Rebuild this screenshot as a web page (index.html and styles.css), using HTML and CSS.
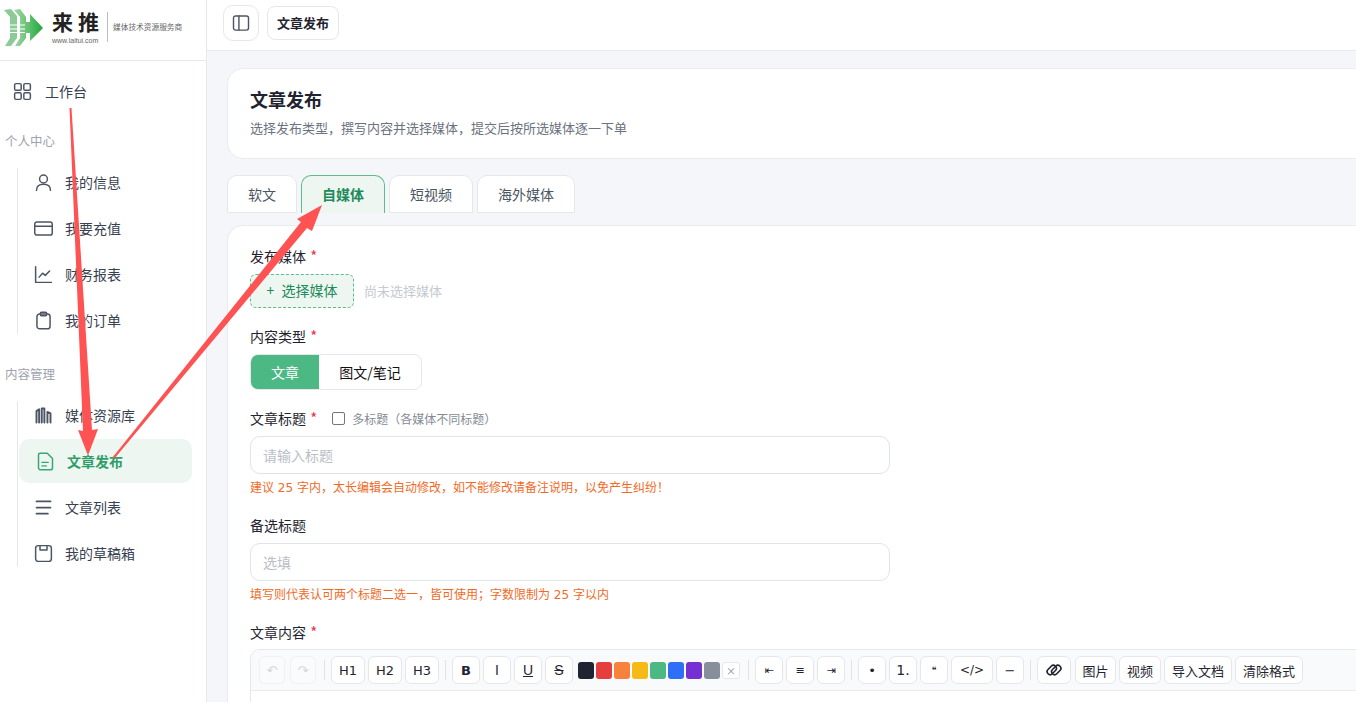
FILE: index.html
```html
<!DOCTYPE html>
<html lang="zh-CN">
<head>
    <meta charset="UTF-8">
    <meta name="viewport" content="width=device-width, initial-scale=1.0">
    <title>文章发布</title>
    <link rel="stylesheet" href="styles.css">
</head>
<body>

    <!-- Left navigation -->
    <aside class="sidebar">
        <div class="logo">
            <svg class="logo-mark" width="44" height="42" viewBox="0 6 44 42">
                <defs>
                    <linearGradient id="logoGreen" x1="0" x2="1" y1="0" y2="0">
                        <stop offset="0" stop-color="#a5d8a8"/>
                        <stop offset="1" stop-color="#1fa83c"/>
                    </linearGradient>
                </defs>
                <path d="M4 10 L11 9 L17 16 L17 38 L11 46 L5 46 L10 38 L10 17 Z" fill="#8ccb98"/>
                <path d="M14 10 L20 9 L26 17 L26 22 L30 22 L30 14 L43 28 L30 41 L30 33 L26 33 L26 38 L20 46 L15 46 L20 38 L20 17 Z" fill="url(#logoGreen)"/>
                <path d="M9 25 H17 M9 29 H17 M9 32.5 H17 M19 25 H25 M19 29 H25 M19 32.5 H25" stroke="#fff" stroke-width="1.2"/>
            </svg>
            <div class="logo-name">
                <span class="logo-cn">来推</span>
                <span class="logo-url">www.laitui.com</span>
            </div>
            <span class="logo-slogan">媒体技术资源服务商</span>
        </div>

        <a class="nav-home">
            <svg class="icon" viewBox="0 0 24 24"><rect x="3" y="3" width="7.5" height="7.5" rx="1.5"/><rect x="13.5" y="3" width="7.5" height="7.5" rx="1.5"/><rect x="3" y="13.5" width="7.5" height="7.5" rx="1.5"/><rect x="13.5" y="13.5" width="7.5" height="7.5" rx="1.5"/></svg>
            工作台
        </a>

        <div class="nav-title nav-title-first">个人中心</div>
        <ul class="nav-list">
            <li class="nav-item">
                <svg class="icon" viewBox="0 0 24 24"><circle cx="12" cy="8" r="4.5"/><path d="M4 21 C4 16 7.5 14 12 14 C16.5 14 20 16 20 21"/></svg>
                我的信息
            </li>
            <li class="nav-item">
                <svg class="icon" viewBox="0 0 24 24"><rect x="2" y="4.5" width="20" height="15" rx="2.5"/><path d="M2 9.5 H22"/></svg>
                我要充值
            </li>
            <li class="nav-item">
                <svg class="icon" viewBox="0 0 24 24"><path d="M3 3 V21 H21"/><path d="M7 15 L11 10.5 L14 13 L19 8"/></svg>
                财务报表
            </li>
            <li class="nav-item">
                <svg class="icon" viewBox="0 0 24 24"><rect x="4.5" y="4.5" width="15" height="17" rx="3"/><rect x="8.5" y="2.5" width="7" height="4" rx="1"/></svg>
                我的订单
            </li>
        </ul>

        <div class="nav-title">内容管理</div>
        <ul class="nav-list">
            <li class="nav-item">
                <svg class="icon" viewBox="0 0 24 24"><path d="M4 20 V7 L7 5 V20 M10 20 V4 H13 V20 M16.5 20 V8 L20 9.5 V20" stroke-width="2.2"/></svg>
                媒体资源库
            </li>
            <li class="nav-item nav-active">
                <svg class="icon" viewBox="0 0 24 24"><path d="M6 2.5 H14 L20 8.5 V19 A2.5 2.5 0 0 1 17.5 21.5 H6.5 A2.5 2.5 0 0 1 4 19 V4.5 A2 2 0 0 1 6 2.5 Z"/><path d="M8 13 H15 M8 17 H13"/></svg>
                文章发布
            </li>
            <li class="nav-item">
                <svg class="icon icon-thick" viewBox="0 0 24 24"><path d="M4 5 H20 M4 12 H20 M4 19 H17"/></svg>
                文章列表
            </li>
            <li class="nav-item">
                <svg class="icon" viewBox="0 0 24 24"><path d="M6 3 H18 A3 3 0 0 1 21 6 V18 A3 3 0 0 1 18 21 H6 A3 3 0 0 1 3 18 V6 A3 3 0 0 1 6 3 Z"/><path d="M8 3 V8 H16 V3"/></svg>
                我的草稿箱
            </li>
        </ul>
    </aside>

    <div class="main">
        <!-- Top bar -->
        <header class="topbar">
            <button class="toggle-btn">
                <svg class="icon icon-toggle" viewBox="0 0 24 24"><rect x="3" y="3.5" width="18" height="17" rx="2.5"/><path d="M9.5 3.5 V20.5"/></svg>
            </button>
            <span class="crumb">文章发布</span>
        </header>

        <div class="content">
            <section class="page-head">
                <h1>文章发布</h1>
                <p>选择发布类型，撰写内容并选择媒体，提交后按所选媒体逐一下单</p>
            </section>

            <div class="tabs">
                <div class="tab tab-soft">软文</div>
                <div class="tab tab-self tab-active">自媒体</div>
                <div class="tab tab-video">短视频</div>
                <div class="tab tab-abroad">海外媒体</div>
            </div>

            <section class="form-card">
                <div class="label">发布媒体 <span class="req">*</span></div>
                <div class="media-row">
                    <button class="media-btn"><span class="plus">+</span>选择媒体</button>
                    <span class="media-none">尚未选择媒体</span>
                </div>

                <div class="label label-type">内容类型 <span class="req">*</span></div>
                <div class="segment">
                    <span class="seg seg-on">文章</span>
                    <span class="seg seg-off">图文/笔记</span>
                </div>

                <div class="label label-title">
                    <span>文章标题 <span class="req">*</span></span>
                    <span class="check"></span>
                    <span class="check-text">多标题（各媒体不同标题）</span>
                </div>
                <div class="input">请输入标题</div>
                <div class="hint">建议 25 字内，太长编辑会自动修改，如不能修改请备注说明，以免产生纠纷！</div>

                <div class="label label-alt">备选标题</div>
                <div class="input">选填</div>
                <div class="hint">填写则代表认可两个标题二选一，皆可使用；字数限制为 25 字以内</div>

                <div class="label label-body">文章内容 <span class="req">*</span></div>
                <div class="editor">
                    <div class="toolbar">
                        <span class="tb tb-off">↶</span>
                        <span class="tb tb-off">↷</span>
                        <i class="sep sep-wide"></i>
                        <span class="tb tb-h">H1</span>
                        <span class="tb tb-h">H2</span>
                        <span class="tb tb-h">H3</span>
                        <i class="sep"></i>
                        <span class="tb tb-bold">B</span>
                        <span class="tb tb-plain">I</span>
                        <span class="tb tb-plain tb-under">U</span>
                        <span class="tb tb-plain tb-strike">S</span>
                        <div class="colors">
                            <i class="color c-black"></i>
                            <i class="color c-red"></i>
                            <i class="color c-orange"></i>
                            <i class="color c-yellow"></i>
                            <i class="color c-green"></i>
                            <i class="color c-blue"></i>
                            <i class="color c-purple"></i>
                            <i class="color c-gray"></i>
                            <i class="color c-none">×</i>
                        </div>
                        <i class="sep sep-wide"></i>
                        <span class="tb tb-small">⇤</span>
                        <span class="tb tb-small">≡</span>
                        <span class="tb tb-small">⇥</span>
                        <i class="sep"></i>
                        <span class="tb">•</span>
                        <span class="tb tb-num">1.</span>
                        <span class="tb tb-quote">❝</span>
                        <span class="tb tb-code">&lt;/&gt;</span>
                        <span class="tb">−</span>
                        <i class="sep"></i>
                        <span class="tb tb-link">
                            <svg width="18" height="18" viewBox="0 0 24 24"><rect x="2" y="8" width="14" height="8" rx="4" transform="rotate(-45 9 12)"/><rect x="8" y="8" width="14" height="8" rx="4" transform="rotate(-45 15 12)"/></svg>
                        </span>
                        <span class="tb tb-text tb-img">图片</span>
                        <span class="tb tb-text tb-video">视频</span>
                        <span class="tb tb-text">导入文档</span>
                        <span class="tb tb-text">清除格式</span>
                    </div>
                </div>
            </section>
        </div>
    </div>

    <!-- Red annotation arrows drawn over the page -->
    <svg class="arrows" width="1356" height="702" viewBox="0 0 1356 702">
        <polygon points="69.5,108 71.5,108 92,430 98,429 88,455.5 78,430 83,431" fill="#ff5252"/>
        <polygon points="112.5,457.5 301,222 297,219 322,205 312,231 307,228 114,459" fill="#ff5252"/>
    </svg>

</body>
</html>
```

FILE: styles.css
```css
* {
    box-sizing: border-box;
}

body {
    margin: 0;
    height: 100vh;
    display: flex;
    overflow: hidden;
    background-color: #f4f6fa;
    color: #1f2430;
    font-family: "Noto Sans CJK SC", "Liberation Sans", sans-serif;
    font-size: 13px;
}

.icon {
    width: 21px;
    height: 21px;
    flex: none;
    fill: none;
    stroke: #4b5563;
    stroke-width: 1.7;
    stroke-linecap: round;
    stroke-linejoin: round;
}

.icon-thick {
    stroke-width: 2;
}

.icon-toggle {
    width: 20px;
    height: 20px;
}

/* Sidebar */
.sidebar {
    width: 207px;
    flex: none;
    background-color: #fff;
    border-right: 1px solid #e6e8ec;
}

.logo {
    height: 61px;
    padding: 6px 0 0;
    display: flex;
    align-items: flex-start;
    border-bottom: 1px solid #e6e8ec;
}

.logo-mark {
    flex: none;
}

.logo-name {
    margin-left: 8px;
    display: flex;
    flex-direction: column;
    flex: none;
    width: 50px;
}

.logo-cn {
    margin-top: 2px;
    font-size: 21px;
    line-height: 26px;
    font-weight: 700;
    letter-spacing: 5px;
    white-space: nowrap;
    color: #222;
}

.logo-url {
    font-size: 7px;
    line-height: 9px;
    margin-top: 2px;
    color: #666;
    font-family: "Liberation Sans", sans-serif;
    white-space: nowrap;
}

.logo-slogan {
    margin: 6px 0 0 5px;
    padding-left: 5px;
    height: 30px;
    line-height: 30px;
    border-left: 1px solid #bbb;
    font-size: 7.7px;
    color: #666;
    white-space: nowrap;
}

.nav-home {
    height: 60px;
    padding-left: 12px;
    display: flex;
    align-items: center;
    gap: 12px;
    font-size: 14px;
    color: #374151;
}

.nav-title {
    height: 20px;
    margin: 30px 0 17px 5px;
    line-height: 20px;
    font-size: 12.5px;
    color: #9ca3af;
}

.nav-title-first {
    margin-top: 10px;
}

/* The guide line is shorter than the rows beside it */
.nav-list {
    display: flow-root;
    list-style: none;
    height: 166px;
    margin: 0 0 0 17px;
    padding: 0;
    border-left: 1px solid #e5e7eb;
}

.nav-item {
    height: 44px;
    margin: 0 14px 2px 1px;
    padding: 0 0 0 14px;
    display: flex;
    align-items: center;
    gap: 11px;
    border-radius: 10px;
    font-size: 14px;
    color: #374151;
}

.nav-item:first-child {
    margin-top: -8px;
}

.nav-active {
    padding-left: 16px;
    background-color: #edf6f1;
    color: #2f9e68;
    font-weight: 700;
}

.nav-active .icon {
    stroke: #38a772;
}

/* Top bar */
.main {
    flex: 1;
    min-width: 0;
    overflow: hidden;
}

.topbar {
    height: 51px;
    padding: 5px 16px 0;
    display: flex;
    align-items: flex-start;
    gap: 8px;
    background-color: #fff;
    border-bottom: 1px solid #e8eaee;
}

.toggle-btn {
    width: 36px;
    height: 36px;
    padding: 0;
    display: flex;
    align-items: center;
    justify-content: center;
    background-color: #fff;
    border: 1px solid #e5e7eb;
    border-radius: 10px;
}

.crumb {
    margin-top: 1px;
    height: 34px;
    padding: 0 9px;
    line-height: 32px;
    background-color: #fff;
    border: 1px solid #e5e7eb;
    border-radius: 8px;
    font-size: 13px;
    font-weight: 700;
}

/* Page content. The cards run past the right edge of the window */
.content {
    width: 1300px;
    padding: 17px 0 0 20px;
}

.page-head {
    height: 91px;
    padding: 17px 22px 0;
    background-color: #fff;
    border: 1px solid #e9ebef;
    border-radius: 16px;
}

.page-head h1 {
    margin: 0;
    font-size: 18px;
    line-height: 26px;
    font-weight: 700;
}

.page-head p {
    margin: 6px 0 0;
    font-size: 13px;
    line-height: 20px;
    color: #6b7280;
}

.tabs {
    margin-top: 16px;
    display: flex;
    gap: 4px;
}

.tab {
    height: 38px;
    line-height: 36px;
    text-align: center;
    background-color: #fff;
    border: 1px solid #e5e7eb;
    border-radius: 10px 10px 0 0;
    font-size: 14px;
    color: #4b5563;
}

.tab-soft {
    width: 70px;
}

.tab-self {
    width: 84px;
}

.tab-video {
    width: 84px;
}

.tab-abroad {
    width: 98px;
}

.tab-active {
    background-color: #edf6f1;
    border-color: #5cbd8c;
    border-bottom: none;
    color: #1f8a5a;
    font-weight: 700;
}

.form-card {
    margin-top: 12px;
    height: 600px;
    padding: 21px 22px;
    background-color: #fff;
    border: 1px solid #e9ebef;
    border-radius: 16px;
}

.label {
    height: 20px;
    line-height: 18px;
    font-size: 14px;
    color: #1f2430;
}

.req {
    margin-left: 1px;
    font-size: 15px;
    line-height: 1;
    color: #e5344a;
}

.label-type {
    margin-top: 19px;
}

.label-title {
    margin-top: 19px;
    display: flex;
    align-items: flex-start;
}

.label-alt {
    margin-top: 19px;
}

.label-body {
    margin-top: 19px;
}

.media-row {
    margin-top: 7px;
    display: flex;
    align-items: center;
    gap: 10px;
}

.media-btn {
    width: 104px;
    height: 34px;
    padding: 0 0 2px;
    background-color: #edf6f1;
    border: 1px dashed #5cbd8c;
    border-radius: 6px;
    font-family: inherit;
    font-size: 14px;
    color: #1f8a5a;
}

.plus {
    margin-right: 7px;
}

.media-none {
    margin-bottom: 2px;
    font-size: 13px;
    color: #c5c9d0;
}

.segment {
    margin-top: 7px;
    width: 172px;
    height: 36px;
    display: flex;
    background-color: #fff;
    border: 1px solid #e5e7eb;
    border-radius: 8px;
    overflow: hidden;
    line-height: 34px;
    text-align: center;
    font-size: 14px;
}

.seg-on {
    width: 68px;
    background-color: #4cb884;
    color: #fff;
}

.seg-off {
    flex: 1;
    color: #111;
}

.check {
    width: 13px;
    height: 13px;
    margin: 3px 0 0 15px;
    border: 1px solid #767676;
    border-radius: 2px;
}

.check-text {
    margin: 1px 0 0 7px;
    font-size: 12px;
    color: #858b96;
}

.input {
    margin-top: 7px;
    width: 640px;
    height: 38px;
    padding-left: 12px;
    line-height: 36px;
    background-color: #fff;
    border: 1px solid #dfe3ea;
    border-radius: 10px;
    font-size: 14px;
    color: #b9bec7;
}

.hint {
    margin-top: 5px;
    height: 18px;
    line-height: 18px;
    font-family: "DejaVu Sans", "Noto Sans CJK SC", sans-serif;
    font-size: 12px;
    color: #f26a1f;
}

/* Rich text editor */
.editor {
    margin-top: 6px;
    width: 1200px;
    height: 200px;
    border: 1px solid #e5e7eb;
    border-radius: 10px;
}

.toolbar {
    height: 41px;
    padding: 6px 8px 0;
    display: flex;
    align-items: flex-start;
    gap: 3px;
    background-color: #f9fafb;
    border-bottom: 1px solid #e9ebef;
    border-radius: 10px 10px 0 0;
}

.tb {
    width: 28px;
    height: 28px;
    flex: none;
    display: flex;
    align-items: center;
    justify-content: center;
    background-color: #fff;
    border: 1px solid #e5e7eb;
    border-radius: 6px;
    font-family: "DejaVu Sans", sans-serif;
    font-size: 13px;
    color: #1f2430;
}

.tb-off {
    width: 26px;
    background-color: #fafbfb;
    border-color: #f0f1f3;
    color: #d5d8dc;
}

.tb-off + .tb-off {
    margin-left: 2px;
}

.tb-h {
    width: 34px;
    font-size: 13px;
}

.tb-bold {
    font-weight: 700;
}

.tb-plain {
    font-family: "Liberation Sans", sans-serif;
    font-size: 14px;
}

.tb-under {
    text-decoration: underline;
}

.tb-strike {
    text-decoration: line-through;
}

.tb-small {
    font-size: 11px;
}

.tb-num {
    font-size: 14px;
}

.tb-quote {
    font-size: 9px;
}

.tb-code {
    width: 42px;
    font-size: 12px;
}

.tb-link {
    width: 34px;
    margin-right: 1px;
}

.tb-link svg {
    fill: none;
    stroke: #1f2430;
    stroke-width: 2.2;
}

.tb-text {
    width: 68px;
    font-family: "Noto Sans CJK SC", sans-serif;
    font-size: 13px;
}

.tb-img {
    width: 41px;
}

.tb-video {
    width: 42px;
}

.sep {
    width: 1px;
    height: 20px;
    margin: 4px 3px 0;
    flex: none;
    background-color: #e1e3e7;
}

.sep-wide {
    margin-left: 5px;
}

.colors {
    margin-left: 2px;
    display: flex;
    gap: 2px;
    padding-top: 6px;
}

.color {
    width: 16px;
    height: 17px;
    border-radius: 3px;
}

.c-black {
    background-color: #1f2430;
}

.c-red {
    background-color: #e53e3e;
}

.c-orange {
    background-color: #f6823c;
}

.c-yellow {
    background-color: #f5b918;
}

.c-green {
    background-color: #4cb884;
}

.c-blue {
    background-color: #2f6ff5;
}

.c-purple {
    background-color: #7430d0;
}

.c-gray {
    background-color: #878f9b;
}

.c-none {
    width: 18px;
    background-color: #fff;
    border: 1px solid #e5e7eb;
    line-height: 15px;
    text-align: center;
    font-style: normal;
    font-size: 10px;
    color: #8a909a;
}

/* Annotation layer */
.arrows {
    position: absolute;
    top: 0;
    left: 0;
    pointer-events: none;
}
```
